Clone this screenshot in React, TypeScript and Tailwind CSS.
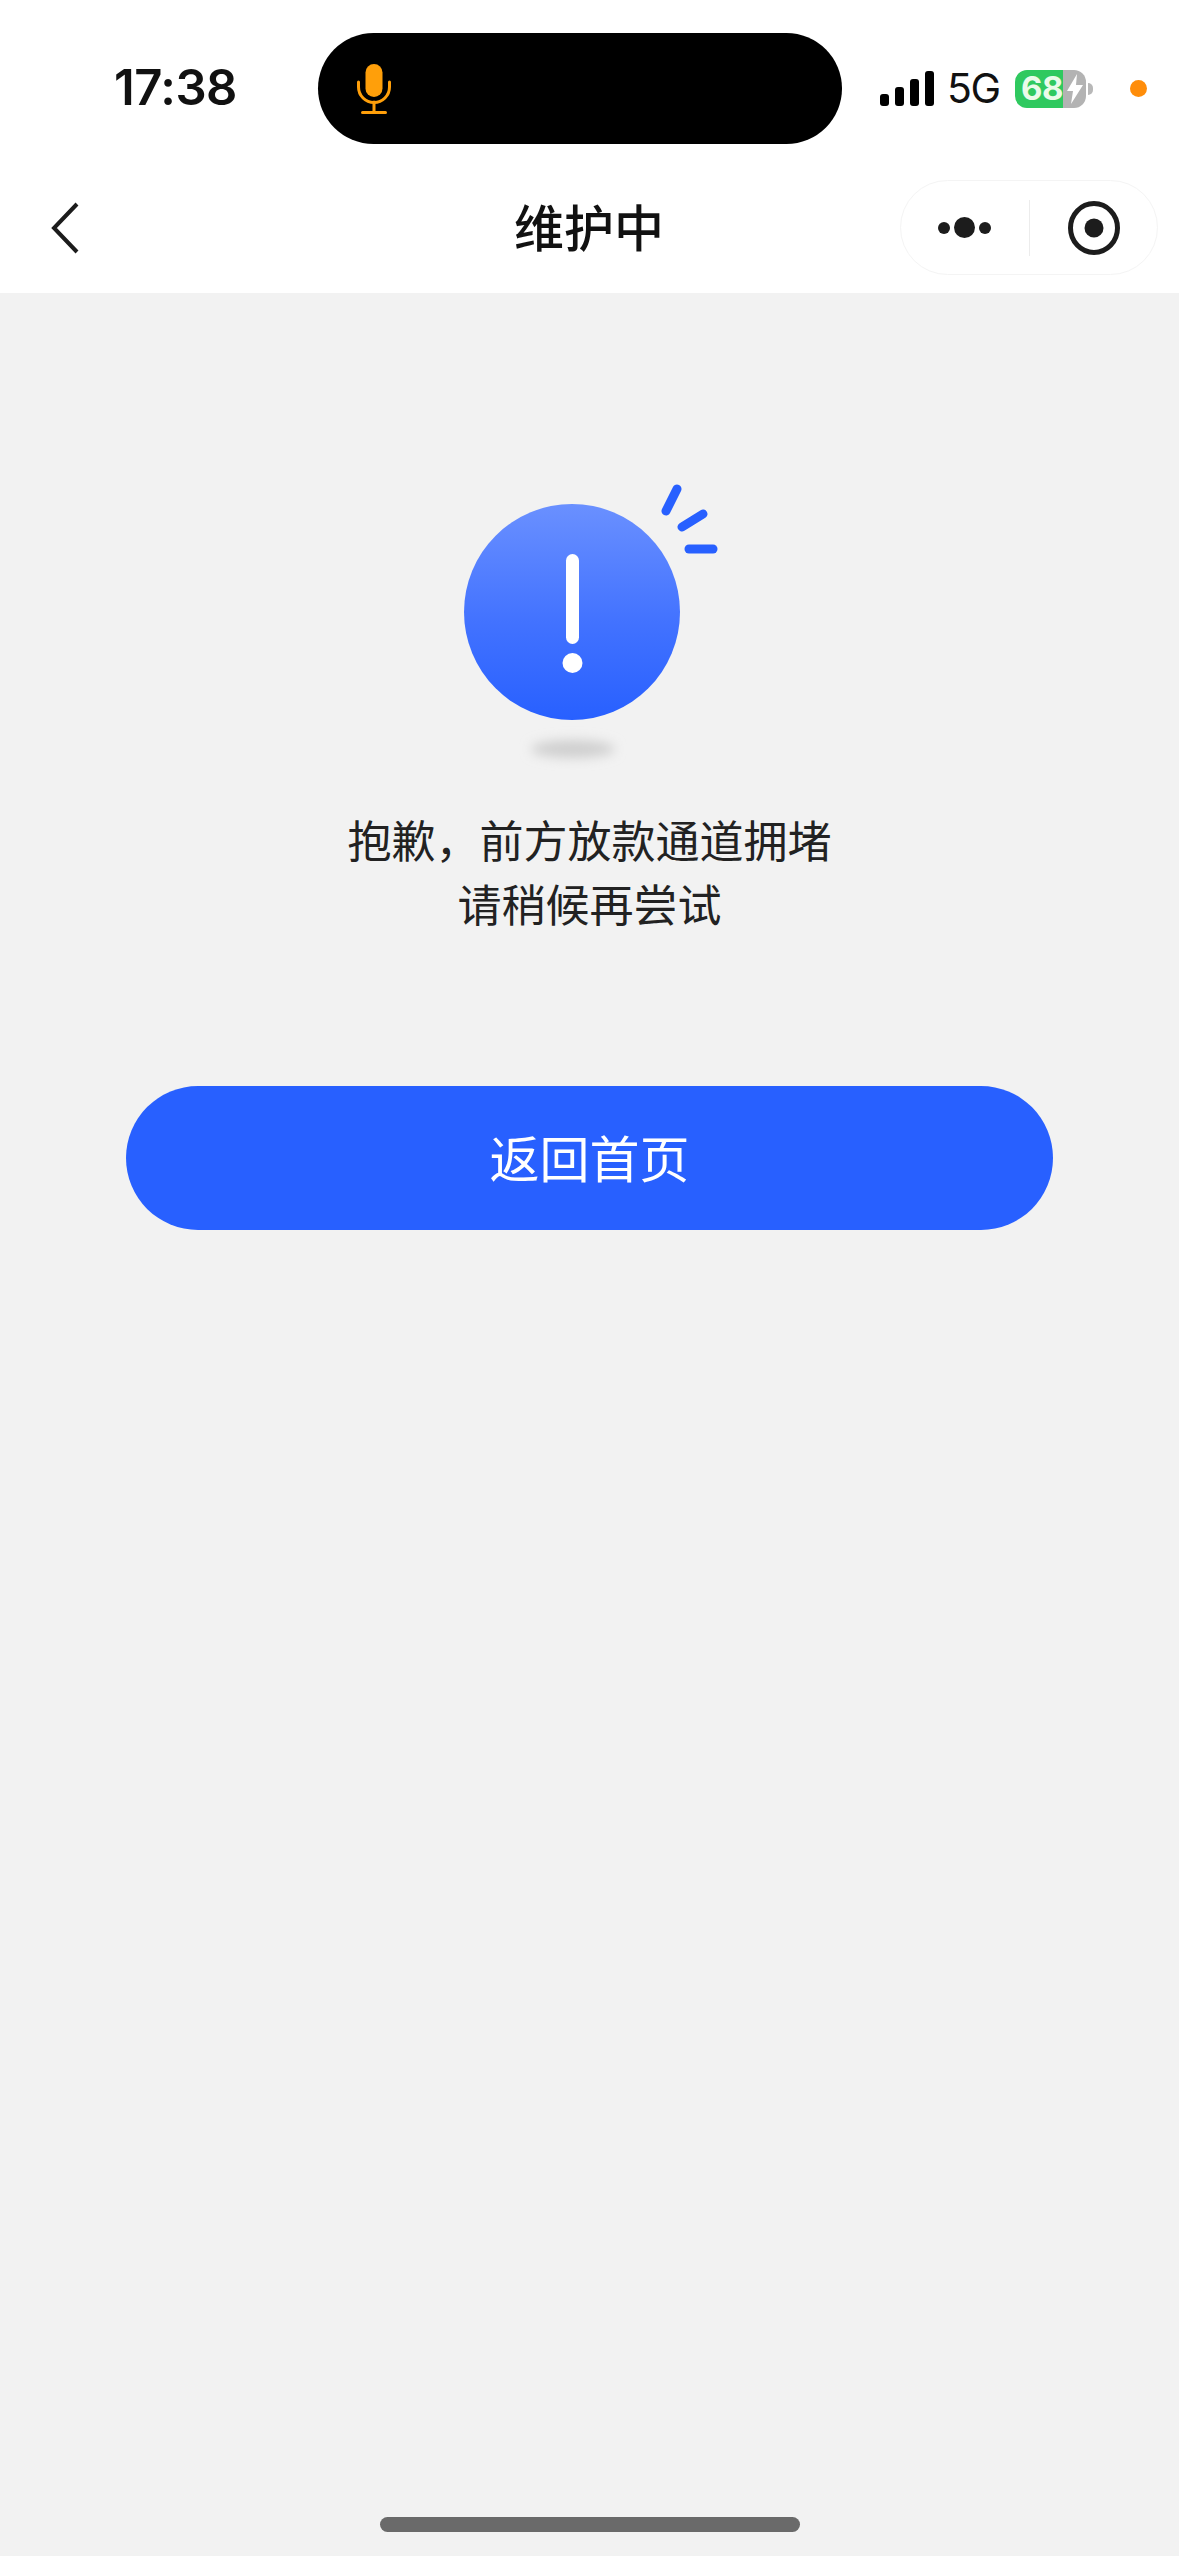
export default function App() {
  return (
    <div className="flex h-[2556px] w-[1179px] flex-col overflow-hidden bg-[#f2f2f2] font-['Noto_Sans_CJK_SC',sans-serif]">
      {/* Status bar + nav */}
      <div className="h-[293px] shrink-0 bg-white">
        <div className="mt-[33px] flex h-[111px] items-center">
          <div className="ml-[114px] w-[204px] -translate-y-[1px] font-['Inter',sans-serif] text-[49px] leading-none font-semibold tracking-[-0.5px] text-[#111]">
            17:38
          </div>
          <div className="flex h-[111px] w-[524px] items-center rounded-[56px] bg-black pl-[39px]">
            <svg width="34" height="50" viewBox="0 0 34 50">
              <rect x="8.5" y="0" width="17" height="33" rx="8.5" fill="#ff9f0a" />
              <path d="M1.5 18v5a15.5 15.5 0 0 0 31 0v-5" fill="none" stroke="#ff9f0a" strokeWidth="3" strokeLinecap="round" />
              <path d="M17 38v10M5.500 48.500h23" fill="none" stroke="#ff9f0a" strokeWidth="3" strokeLinecap="round" />
            </svg>
          </div>
          <svg className="ml-[38px]" width="54" height="36" viewBox="0 0 54 36">
            <rect x="0" y="23" width="9" height="12" rx="3" fill="#000" />
            <rect x="15" y="16" width="9" height="19" rx="3" fill="#000" />
            <rect x="30" y="8" width="9" height="27" rx="3" fill="#000" />
            <rect x="45" y="0" width="9" height="35" rx="3" fill="#000" />
          </svg>
          <div className="ml-[13px] w-[68px] font-['Inter',sans-serif] text-[41px] leading-none font-normal tracking-[-1.5px] text-[#111]">
            5G
          </div>
          <div className="flex h-[38px] w-[71px] overflow-hidden rounded-[12px]">
            <div className="flex w-[48px] items-center justify-end bg-[#2fc95f] font-['Inter',sans-serif] text-[33px] leading-none font-bold tracking-[-0.5px] text-[#eafbe9]">
              68
            </div>
            <div className="flex flex-1 items-center justify-center bg-[#b3b3b3]">
              <svg width="18" height="30" viewBox="0 0 18 30">
                <path d="M11 0 1 17h6l-2 13L17 11h-7z" fill="#fff" />
              </svg>
            </div>
          </div>
          <div className="ml-[2px] h-[12px] w-[5px] rounded-r-full bg-[#b8b8b8]" />
          <div className="ml-[37px] h-[17px] w-[17px] rounded-full bg-[#ff8d0a]" />
        </div>

        <div className="mt-[36px] flex h-[95px] items-center">
          <svg className="ml-[50px]" width="30" height="54" viewBox="0 0 30 54">
            <path d="M27 3 4 27l23 24" fill="none" stroke="#1c1c1c" strokeWidth="4" />
          </svg>
          <div className="ml-[431px] w-[156px] -translate-y-[3px] text-center text-[50px] leading-none font-medium text-[#111]">
            维护中
          </div>
          <div className="ml-[233px] flex h-[95px] w-[258px] items-center rounded-[48px] border border-[#f4f4f4] bg-white">
            <div className="flex w-[128px] items-center justify-center gap-[4px] pr-[2px]">
              <div className="h-[12px] w-[12px] rounded-full bg-[#1c1c1c]" />
              <div className="h-[21px] w-[21px] rounded-full bg-[#1c1c1c]" />
              <div className="h-[12px] w-[12px] rounded-full bg-[#1c1c1c]" />
            </div>
            <div className="h-[56px] w-px bg-[#ececec]" />
            <div className="flex flex-1 items-center justify-center">
              <svg width="52" height="54" viewBox="0 0 52 54">
                <ellipse cx="26" cy="27" rx="23.500" ry="24.500" fill="none" stroke="#1c1c1c" strokeWidth="5" />
                <circle cx="26" cy="27" r="9.500" fill="#1c1c1c" />
              </svg>
            </div>
          </div>
        </div>
      </div>

      {/* Content */}
      <div className="flex flex-1 flex-col items-center">
        <svg className="mt-[188px] ml-[-10px] shrink-0" width="270" height="290" viewBox="0 0 270 290">
          <defs>
            <linearGradient id="disc" x1="0" y1="0" x2="0" y2="1">
              <stop offset="0" stopColor="#6a90ff" />
              <stop offset="0.55" stopColor="#4272ff" />
              <stop offset="1" stopColor="#2860ff" />
            </linearGradient>
            <filter id="soft" x="-50%" y="-100%" width="200%" height="300%">
              <feGaussianBlur stdDeviation="6" />
            </filter>
          </defs>
          <circle cx="122" cy="131" r="108" fill="url(#disc)" />
          <rect x="116" y="73" width="13" height="90" rx="6.500" fill="#fff" />
          <circle cx="122.500" cy="182" r="10" fill="#fff" />
          <g stroke="#2860ff" strokeWidth="9" strokeLinecap="round">
            <path d="M227 8 216 30" />
            <path d="M253 33 232 46" />
            <path d="M239 68h24" />
          </g>
          <ellipse cx="123" cy="268" rx="42" ry="9" fill="#cfcfcf" filter="url(#soft)" />
        </svg>

        <div className="mt-[36px] text-center text-[44px] leading-[64px] font-normal text-[#222]">
          <div>抱歉，前方放款通道拥堵</div>
          <div>请稍候再尝试</div>
        </div>

        <button className="mt-[151px] flex h-[144px] w-[927px] shrink-0 items-center justify-center rounded-[72px] bg-[#2860ff] text-[50px] leading-none font-normal text-white">
          <span className="-translate-y-[2px]">返回首页</span>
        </button>

        <div className="mt-auto mb-[24px] h-[15px] w-[420px] rounded-full bg-[#6a6a6a]" />
      </div>
    </div>
  );
}
